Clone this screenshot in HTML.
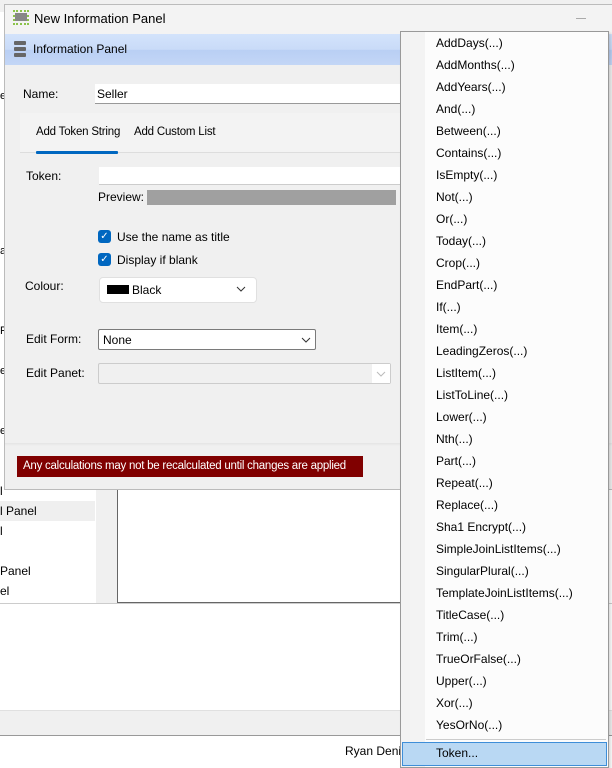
<!DOCTYPE html>
<html><head><meta charset="utf-8"><style>
*{box-sizing:border-box;margin:0;padding:0}
body{width:612px;height:768px;overflow:hidden;background:#fff;font-family:"Liberation Sans",sans-serif;font-size:12px;color:#000;position:relative}
.a{position:absolute;white-space:nowrap}
.mi{position:absolute;left:436px;font-size:12px;color:#000}
</style></head><body>
<div class="a" style="left:0;top:0;width:612px;height:12px;background:#f0f0f0"></div>
<div class="a" style="left:0;top:490px;width:96px;height:113px;background:#fff"></div>
<div class="a" style="left:0;top:501px;width:95px;height:20px;background:#efefef"></div>
<div class="a" style="left:0;top:484px">l</div>
<div class="a" style="left:0;top:504px">l Panel</div>
<div class="a" style="left:0;top:524px">l</div>
<div class="a" style="left:0;top:564px">Panel</div>
<div class="a" style="left:0;top:584px">el</div>
<div class="a" style="left:96px;top:490px;width:21px;height:113px;background:#f0f0f0"></div>
<div class="a" style="left:117px;top:488px;width:300px;height:115px;background:#fff;border-left:1px solid #666;border-bottom:1px solid #666"></div>
<div class="a" style="left:0;top:603px;width:612px;height:1px;background:#ccc"></div>
<div class="a" style="left:0;top:710px;width:612px;height:25px;background:#f0f0f0;border-top:1px solid #e0e0e0"></div>
<div class="a" style="left:0;top:735px;width:612px;height:1px;background:#999"></div>
<div class="a" style="left:345px;top:744px">Ryan Denis</div>
<div class="a" style="left:0;top:90px;font-size:11px">e</div>
<div class="a" style="left:0;top:245px;font-size:11px">at</div>
<div class="a" style="left:0;top:325px;font-size:11px">Pe</div>
<div class="a" style="left:0;top:365px;font-size:11px">e</div>
<div class="a" style="left:0;top:425px;font-size:11px">e</div>

<div class="a" style="left:4px;top:4px;width:612px;height:486px;background:#f0f0f0;border:1px solid #bbb"></div>
<div class="a" style="left:5px;top:5px;width:612px;height:30px;background:#f3f3f3"></div>
<div class="a" style="left:13px;top:10px;width:16px;height:15px;border:2px dotted #8bc34a"></div>
<div class="a" style="left:15px;top:13px;width:12px;height:8px;background:#888"></div>
<div class="a" style="left:34px;top:11px;font-size:13px">New Information Panel</div>
<div class="a" style="left:576px;top:18px;width:10px;height:1px;background:#aaa"></div>
<div class="a" style="left:5px;top:34px;width:612px;height:31px;background:linear-gradient(#d3e3fb,#c9dbf8 50%,#b9cff4 52%,#c3d6f6)"></div>
<div class="a" style="left:14px;top:41px;width:12px;height:4px;background:#666;border-radius:1px"></div>
<div class="a" style="left:14px;top:47px;width:12px;height:4px;background:#666;border-radius:1px"></div>
<div class="a" style="left:14px;top:53px;width:12px;height:4px;background:#666;border-radius:1px"></div>
<div class="a" style="left:33px;top:42px">Information Panel</div>
<div class="a" style="left:23px;top:87px">Name:</div>
<div class="a" style="left:95px;top:84px;width:310px;height:20px;background:#fff;border-bottom:1px solid #999"></div>
<div class="a" style="left:97px;top:87px">Seller</div>
<div class="a" style="left:20px;top:113px;width:390px;height:40px;background:#f3f3f3;border-bottom:1px solid #ddd"></div>
<div class="a" style="left:36px;top:126px;font-size:11.5px;letter-spacing:-0.2px">Add Token String</div>
<div class="a" style="left:134px;top:126px;font-size:11.5px;letter-spacing:-0.2px">Add Custom List</div>
<div class="a" style="left:36px;top:151px;width:82px;height:3px;background:#0067c0;border-radius:1px"></div>
<div class="a" style="left:26px;top:169px">Token:</div>
<div class="a" style="left:99px;top:167px;width:310px;height:18px;background:#fff;border-bottom:1px solid #ccc"></div>
<div class="a" style="left:98px;top:190px">Preview:</div>
<div class="a" style="left:147px;top:190px;width:249px;height:15px;background:#a0a0a0"></div>
<div class="a" style="left:98px;top:230px;width:13px;height:13px;background:#0067c0;border-radius:3px;color:#fff;font-size:10px;line-height:13px;text-align:center">✓</div>
<div class="a" style="left:117px;top:230px">Use the name as title</div>
<div class="a" style="left:98px;top:253px;width:13px;height:13px;background:#0067c0;border-radius:3px;color:#fff;font-size:10px;line-height:13px;text-align:center">✓</div>
<div class="a" style="left:117px;top:253px">Display if blank</div>
<div class="a" style="left:25px;top:279px">Colour:</div>
<div class="a" style="left:99px;top:277px;width:158px;height:26px;background:#fff;border:1px solid #e0e0e0;border-radius:4px"></div>
<div class="a" style="left:107px;top:285px;width:22px;height:9px;background:#000"></div>
<div class="a" style="left:132px;top:283px">Black</div>
<svg class="a" style="left:236px;top:286px" width="10" height="6"><path d="M1 1l4 4 4-4" stroke="#333" fill="none"/></svg>
<div class="a" style="left:26px;top:332px">Edit Form:</div>
<div class="a" style="left:98px;top:329px;width:218px;height:21px;background:#fff;border:1px solid #7a7a7a;border-radius:2px"></div>
<div class="a" style="left:103px;top:333px">None</div>
<svg class="a" style="left:301px;top:337px" width="10" height="6"><path d="M1 1l4 4 4-4" stroke="#333" fill="none"/></svg>
<div class="a" style="left:26px;top:366px">Edit Panet:</div>
<div class="a" style="left:98px;top:363px;width:293px;height:21px;background:#f0f0f0;border:1px solid #ccc;border-radius:2px"></div>
<div class="a" style="left:372px;top:364px;width:18px;height:19px;background:#fff"></div>
<svg class="a" style="left:376px;top:371px" width="10" height="6"><path d="M1 1l4 4 4-4" stroke="#bbb" fill="none"/></svg>
<div class="a" style="left:5px;top:443px;width:612px;height:3px;background:linear-gradient(#e4e4e4,#f0f0f0)"></div>
<div class="a" style="left:17px;top:456px;width:346px;height:21px;background:#800000;color:#fff;padding:4px 0 0 6px;font-size:11.5px;letter-spacing:-0.25px;overflow:hidden">Any calculations may not be recalculated until changes are applied</div>

<div class="a" style="left:400px;top:31px;width:209px;height:737px;background:#fcfcfc;border:1px solid #999;box-shadow:2px 2px 3px rgba(0,0,0,.15)"></div>
<div class="a" style="left:401px;top:32px;width:24px;height:735px;background:#f3f3f3"></div>
<div class="a" style="left:426px;top:739px;width:180px;height:1px;background:#ccc"></div>
<div class="a" style="left:402px;top:742px;width:205px;height:24px;background:#b9d8f3;border:1px solid #3e8ed8"></div>
<div class="mi" style="top:36px">AddDays(...)</div>
<div class="mi" style="top:58px">AddMonths(...)</div>
<div class="mi" style="top:80px">AddYears(...)</div>
<div class="mi" style="top:102px">And(...)</div>
<div class="mi" style="top:124px">Between(...)</div>
<div class="mi" style="top:146px">Contains(...)</div>
<div class="mi" style="top:168px">IsEmpty(...)</div>
<div class="mi" style="top:190px">Not(...)</div>
<div class="mi" style="top:212px">Or(...)</div>
<div class="mi" style="top:234px">Today(...)</div>
<div class="mi" style="top:256px">Crop(...)</div>
<div class="mi" style="top:278px">EndPart(...)</div>
<div class="mi" style="top:300px">If(...)</div>
<div class="mi" style="top:322px">Item(...)</div>
<div class="mi" style="top:344px">LeadingZeros(...)</div>
<div class="mi" style="top:366px">ListItem(...)</div>
<div class="mi" style="top:388px">ListToLine(...)</div>
<div class="mi" style="top:410px">Lower(...)</div>
<div class="mi" style="top:432px">Nth(...)</div>
<div class="mi" style="top:454px">Part(...)</div>
<div class="mi" style="top:476px">Repeat(...)</div>
<div class="mi" style="top:498px">Replace(...)</div>
<div class="mi" style="top:520px">Sha1 Encrypt(...)</div>
<div class="mi" style="top:542px">SimpleJoinListItems(...)</div>
<div class="mi" style="top:564px">SingularPlural(...)</div>
<div class="mi" style="top:586px">TemplateJoinListItems(...)</div>
<div class="mi" style="top:608px">TitleCase(...)</div>
<div class="mi" style="top:630px">Trim(...)</div>
<div class="mi" style="top:652px">TrueOrFalse(...)</div>
<div class="mi" style="top:674px">Upper(...)</div>
<div class="mi" style="top:696px">Xor(...)</div>
<div class="mi" style="top:718px">YesOrNo(...)</div>
<div class="mi" style="top:746px">Token...</div>
</body></html>
